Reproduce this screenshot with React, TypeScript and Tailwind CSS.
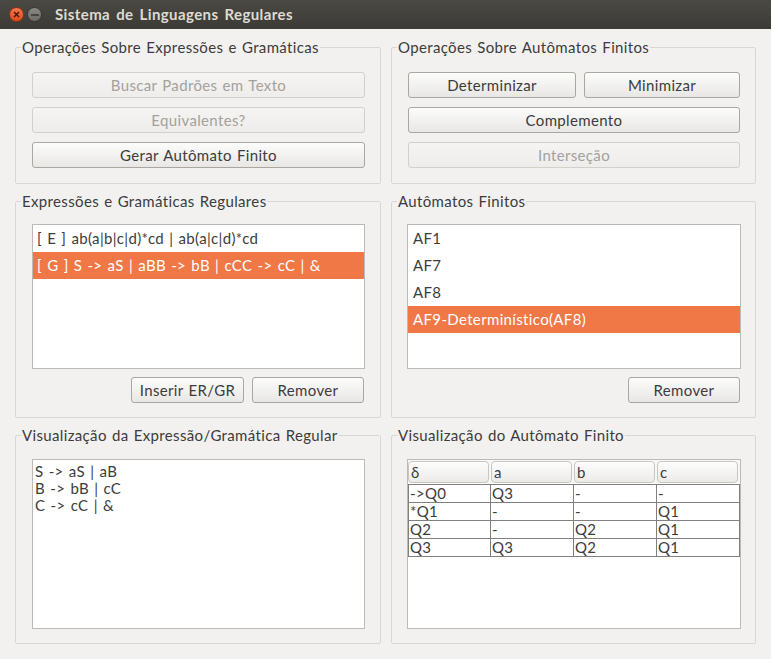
import React from 'react';

const FONT = "font-['Lato','Noto_Sans',sans-serif]";

function Button({ label, disabled, className = '' }: { label: string; disabled?: boolean; className?: string }) {
  return (
    <div
      className={
        'h-[26px] rounded-[3px] border flex items-center justify-center leading-none ' +
        (disabled
          ? 'border-[#d3d0cc] bg-gradient-to-b from-[#f5f4f3] to-[#eeedeb] text-[#a4a19c] '
          : 'border-[#aaa6a0] bg-gradient-to-b from-[#fcfcfb] to-[#e8e7e5] text-[#3c3c3c] ') +
        className
      }
    >
      {label}
    </div>
  );
}

function Group({ title, children }: { title: string; children: React.ReactNode }) {
  return (
    <fieldset className="border border-[#d9d7d3] rounded-[2px] p-0 m-0 min-w-0">
      <legend className="ml-[5px] px-[1px] leading-[18px] text-[#3c3c3c]">{title}</legend>
      {children}
    </fieldset>
  );
}

const expressions = [
  { text: '[ E ] ab(a|b|c|d)*cd | ab(a|c|d)*cd', selected: false },
  { text: '[ G ] S -> aS | aBB -> bB | cCC -> cC | &', selected: true },
];

const automata = [
  { text: 'AF1', selected: false },
  { text: 'AF7', selected: false },
  { text: 'AF8', selected: false },
  { text: 'AF9-Determinístico(AF8)', selected: true },
];

const table = [
  ['->Q0', 'Q3', '-', '-'],
  ['*Q1', '-', '-', 'Q1'],
  ['Q2', '-', 'Q2', 'Q1'],
  ['Q3', 'Q3', 'Q2', 'Q1'],
];

function ListBox({ items, pad }: { items: { text: string; selected: boolean }[]; pad: string }) {
  return (
    <div className="h-[145px] bg-white border border-[#bdbab5] flex flex-col">
      {items.map((it) => (
        <div
          key={it.text}
          className={
            'h-[27px] flex items-center whitespace-nowrap ' +
            pad +
            (it.selected ? ' bg-[#f07746] text-white' : ' text-[#3c3c3c]')
          }
        >
          {it.text}
        </div>
      ))}
    </div>
  );
}

export default function App() {
  return (
    <div
      className={`w-[771px] h-[659px] bg-[#f2f1f0] flex flex-col text-[15px] text-[#3c3c3c] tracking-[0.35px] [word-spacing:1px] overflow-hidden ${FONT}`}
    >
      {/* Title bar */}
      <div className="h-[29px] bg-gradient-to-b from-[#4a4944] to-[#3b3a36] flex items-center pl-[9px] shrink-0">
        <div className="w-[15px] h-[15px] rounded-full bg-gradient-to-b from-[#f4754b] to-[#df4b1a] border border-[#8f3412] flex items-center justify-center">
          <svg width="7" height="7" viewBox="0 0 7 7">
            <path d="M1 1L6 6M6 1L1 6" stroke="#3a1a0c" strokeWidth="1.4" />
          </svg>
        </div>
        <div className="w-[15px] h-[15px] rounded-full bg-gradient-to-b from-[#8a8883] to-[#6d6b66] border border-[#3a3935] flex items-center justify-center ml-[3px]">
          <svg width="8" height="2" viewBox="0 0 8 2">
            <path d="M0 1H8" stroke="#33322e" strokeWidth="1.4" />
          </svg>
        </div>
        <div className="ml-[13px] font-bold text-[15px] text-[#dfdbd2] tracking-[0.4px] [word-spacing:2px]">
          Sistema de Linguagens Regulares
        </div>
      </div>

      <div className="grid grid-cols-[366px_365px] grid-rows-[146px_226px_218px] gap-x-[10px] gap-y-[8px] pl-[15px] pt-[9px]">
        {/* Row 1 */}
        <Group title="Operações Sobre Expressões e Gramáticas">
          <div className="pl-[16px] pr-[15px] pt-[16px] flex flex-col gap-[9px]">
            <Button label="Buscar Padrões em Texto" disabled />
            <Button label="Equivalentes?" disabled />
            <Button label="Gerar Autômato Finito" />
          </div>
        </Group>
        <Group title="Operações Sobre Autômatos Finitos">
          <div className="pl-[16px] pr-[15px] pt-[16px] flex flex-col gap-[9px]">
            <div className="flex gap-[8px]">
              <Button label="Determinizar" className="w-[168px]" />
              <Button label="Minimizar" className="flex-1" />
            </div>
            <Button label="Complemento" />
            <Button label="Interseção" disabled />
          </div>
        </Group>

        {/* Row 2 */}
        <Group title="Expressões e Gramáticas Regulares">
          <div className="pl-[16px] pr-[15px] pt-[14px] flex flex-col">
            <ListBox items={expressions} pad="pl-[4px]" />
            <div className="flex justify-end gap-[8px] mt-[8px] pr-[1px]">
              <Button label="Inserir ER/GR" className="w-[113px]" />
              <Button label="Remover" className="w-[112px]" />
            </div>
          </div>
        </Group>
        <Group title="Autômatos Finitos">
          <div className="pl-[15px] pr-[14px] pt-[14px] flex flex-col">
            <ListBox items={automata} pad="pl-[5px]" />
            <div className="flex justify-end mt-[8px] pr-[1px]">
              <Button label="Remover" className="w-[112px]" />
            </div>
          </div>
        </Group>

        {/* Row 3 */}
        <Group title="Visualização da Expressão/Gramática Regular">
          <div className="pl-[16px] pr-[15px] pt-[15px]">
            <div className="h-[170px] bg-white border border-[#bdbab5] pl-[2px] pt-[3px] leading-[17px] text-[#3c3c3c]">
              <div>S -&gt; aS | aB</div>
              <div>B -&gt; bB | cC</div>
              <div>C -&gt; cC | &amp;</div>
            </div>
          </div>
        </Group>
        <Group title="Visualização do Autômato Finito">
          <div className="pl-[15px] pr-[14px] pt-[15px]">
            <div className="h-[170px] bg-white border border-[#bdbab5]">
              <div className="flex gap-[2px] pt-[1px] mb-[1px] bg-[#f7f7f6]">
                {['δ', 'a', 'b', 'c'].map((h) => (
                  <div
                    key={h}
                    className="w-[81px] h-[22px] rounded-[4px] border border-[#c9c6c2] bg-gradient-to-b from-[#fdfdfd] to-[#ecebe9] flex items-center pl-[2px] leading-none"
                  >
                    {h}
                  </div>
                ))}
              </div>
              <div className="grid grid-cols-[82px_83px_83px_83px] border-l border-t border-[#808080] w-[332px]">
                {table.flat().map((c, i) => (
                  <div key={i} className="h-[18px] border-r border-b border-[#808080] pl-[1px] leading-[17px] whitespace-nowrap">
                    {c}
                  </div>
                ))}
              </div>
            </div>
          </div>
        </Group>
      </div>
    </div>
  );
}
